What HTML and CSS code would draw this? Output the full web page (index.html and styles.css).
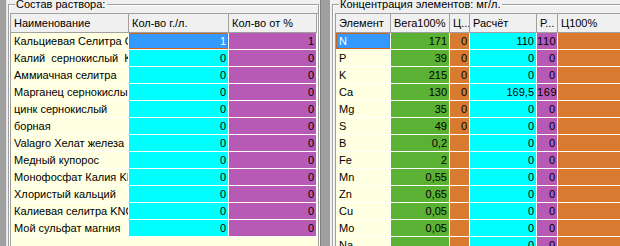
FILE: index.html
```html
<!DOCTYPE html>
<html lang="ru">
<head>
<meta charset="utf-8">
<title>Раствор</title>
<link rel="stylesheet" href="styles.css">
</head>
<body>
<div class="screen">
  <div class="edge"></div>
  <section class="panel panel-left">
    <div class="group group-left">
      <span class="caption">Состав раствора:</span>
      <div class="grid grid-left">
        <div class="hd">Наименование</div>
        <div class="hd">Кол-во г./л.</div>
        <div class="hd">Кол-во от %</div>

        <div class="c name">Кальциевая Селитра Ca(NO3)2</div>
        <div class="c num sel">1</div>
        <div class="c num purple">1</div>

        <div class="c name">Калий  сернокислый  K2SO4</div>
        <div class="c num cyan">0</div>
        <div class="c num purple">0</div>

        <div class="c name">Аммиачная селитра</div>
        <div class="c num cyan">0</div>
        <div class="c num purple">0</div>

        <div class="c name">Марганец сернокислый</div>
        <div class="c num cyan">0</div>
        <div class="c num purple">0</div>

        <div class="c name">цинк сернокислый</div>
        <div class="c num cyan">0</div>
        <div class="c num purple">0</div>

        <div class="c name">борная</div>
        <div class="c num cyan">0</div>
        <div class="c num purple">0</div>

        <div class="c name">Valagro Хелат железа</div>
        <div class="c num cyan">0</div>
        <div class="c num purple">0</div>

        <div class="c name">Медный купорос</div>
        <div class="c num cyan">0</div>
        <div class="c num purple">0</div>

        <div class="c name">Монофосфат Калия KH2PO4</div>
        <div class="c num cyan">0</div>
        <div class="c num purple">0</div>

        <div class="c name">Хлористый кальций</div>
        <div class="c num cyan">0</div>
        <div class="c num purple">0</div>

        <div class="c name">Калиевая селитра KNO3</div>
        <div class="c num cyan">0</div>
        <div class="c num purple">0</div>

        <div class="c name">Мой сульфат магния</div>
        <div class="c num cyan">0</div>
        <div class="c num purple">0</div>
      </div>
    </div>
  </section>
  <div class="splitter"></div>
  <section class="panel panel-right">
    <div class="group group-right">
      <span class="caption">Концентрация элементов: мг/л.</span>
      <div class="grid grid-right">
        <div class="hd">Элемент</div>
        <div class="hd">Вега100%</div>
        <div class="hd">Ц...</div>
        <div class="hd">Расчёт</div>
        <div class="hd">Р...</div>
        <div class="hd">Ц100%</div>

        <div class="c name sel">N</div>
        <div class="c num green">171</div>
        <div class="c num orange">0</div>
        <div class="c num cyan">110</div>
        <div class="c num purple ovf">110</div>
        <div class="c orange"></div>

        <div class="c name">P</div>
        <div class="c num green">39</div>
        <div class="c num orange">0</div>
        <div class="c num cyan">0</div>
        <div class="c num purple">0</div>
        <div class="c orange"></div>

        <div class="c name">K</div>
        <div class="c num green">215</div>
        <div class="c num orange">0</div>
        <div class="c num cyan">0</div>
        <div class="c num purple">0</div>
        <div class="c orange"></div>

        <div class="c name">Ca</div>
        <div class="c num green">130</div>
        <div class="c num orange">0</div>
        <div class="c num cyan">169,5</div>
        <div class="c num purple ovf">169,5</div>
        <div class="c orange"></div>

        <div class="c name">Mg</div>
        <div class="c num green">35</div>
        <div class="c num orange">0</div>
        <div class="c num cyan">0</div>
        <div class="c num purple">0</div>
        <div class="c orange"></div>

        <div class="c name">S</div>
        <div class="c num green">49</div>
        <div class="c num orange">0</div>
        <div class="c num cyan">0</div>
        <div class="c num purple">0</div>
        <div class="c orange"></div>

        <div class="c name">B</div>
        <div class="c num green">0,2</div>
        <div class="c num orange"></div>
        <div class="c num cyan">0</div>
        <div class="c num purple">0</div>
        <div class="c orange"></div>

        <div class="c name">Fe</div>
        <div class="c num green">2</div>
        <div class="c num orange"></div>
        <div class="c num cyan">0</div>
        <div class="c num purple">0</div>
        <div class="c orange"></div>

        <div class="c name">Mn</div>
        <div class="c num green">0,55</div>
        <div class="c num orange"></div>
        <div class="c num cyan">0</div>
        <div class="c num purple">0</div>
        <div class="c orange"></div>

        <div class="c name">Zn</div>
        <div class="c num green">0,65</div>
        <div class="c num orange"></div>
        <div class="c num cyan">0</div>
        <div class="c num purple">0</div>
        <div class="c orange"></div>

        <div class="c name">Cu</div>
        <div class="c num green">0,05</div>
        <div class="c num orange"></div>
        <div class="c num cyan">0</div>
        <div class="c num purple">0</div>
        <div class="c orange"></div>

        <div class="c name">Mo</div>
        <div class="c num green">0,05</div>
        <div class="c num orange"></div>
        <div class="c num cyan">0</div>
        <div class="c num purple">0</div>
        <div class="c orange"></div>

        <div class="c name">Na</div>
        <div class="c num green"></div>
        <div class="c num orange"></div>
        <div class="c num cyan">0</div>
        <div class="c num purple">0</div>
        <div class="c orange"></div>
      </div>
    </div>
  </section>
</div>
</body>
</html>
```
FILE: styles.css
```css
html, body {
  margin: 0;
  padding: 0;
  background: #f0f0f0;
}

.screen {
  display: flex;
  width: 620px;
  height: 246px;
  overflow: hidden;
  font-family: "Liberation Sans", Arial, sans-serif;
  font-size: 11px;
  color: #000;
  background: #f0f0f0;
}

.edge {
  flex: none;
  width: 6px;
  background: #a0a0a0;
  border-right: 1px solid #e3e3e3;
}

.panel {
  flex: none;
  background: #f0f0f0;
  padding-top: 4px;
  box-sizing: border-box;
}

.panel-left {
  width: 313px;
  padding-left: 1px;
}

.splitter {
  flex: none;
  width: 9px;
  background: #a0a0a0;
  border-left: 1px solid #808080;
}

.panel-right {
  flex: 1;
  padding-left: 2px;
}

.group {
  position: relative;
  box-sizing: border-box;
  height: 400px;
  border: 1px solid #a0a0a0;
  box-shadow: inset 1px 1px 0 #fff, 1px 1px 0 #fff;
  padding-top: 8px;
}

.group-left {
  width: 311px;
  padding-left: 1px;
}

.group-right {
  width: 320px;
  padding-left: 2px;
}

.caption {
  position: absolute;
  top: -7px;
  left: 6px;
  padding: 0 2px 0 1px;
  background: #f0f0f0;
  line-height: 13px;
  white-space: nowrap;
}

.grid {
  display: grid;
  grid-template-rows: 19px;
  grid-auto-rows: 17px;
  align-content: start;
  box-sizing: border-box;
  height: 300px;
  background: #ffffe1;
  border-top: 1px solid #a0a0a0;
  border-left: 1px solid #a0a0a0;
}

.grid-left {
  width: 308px;
  grid-template-columns: 118px 100px 88px;
}

.grid-right {
  width: 320px;
  grid-template-columns: 55px 59px 20px 67px 21px 98px;
}

.hd {
  box-sizing: border-box;
  background: #f0f0f0;
  border-right: 1px solid #a0a0a0;
  border-bottom: 1px solid #a0a0a0;
  padding: 0 2px 0 3px;
  line-height: 18px;
  white-space: nowrap;
  overflow: hidden;
}

.c {
  box-sizing: border-box;
  border-right: 1px solid #fff;
  border-bottom: 1px solid #fff;
  line-height: 16px;
  white-space: pre;
  overflow: hidden;
}

.name {
  background: #ffffe1;
  padding-left: 3px;
}

.num {
  text-align: right;
  padding-right: 2px;
}

.num.ovf {
  text-align: left;
  padding-left: 0;
  padding-right: 0;
  letter-spacing: 0.6px;
}

.cyan { background: #00ffff; }
.purple { background: #b65ab5; }
.green { background: #5ab133; }
.orange { background: #d97a31; }

.sel {
  background: #3399ff;
  color: #fff;
  box-shadow: inset 0 0 0 1px #c8651e;
}
```
